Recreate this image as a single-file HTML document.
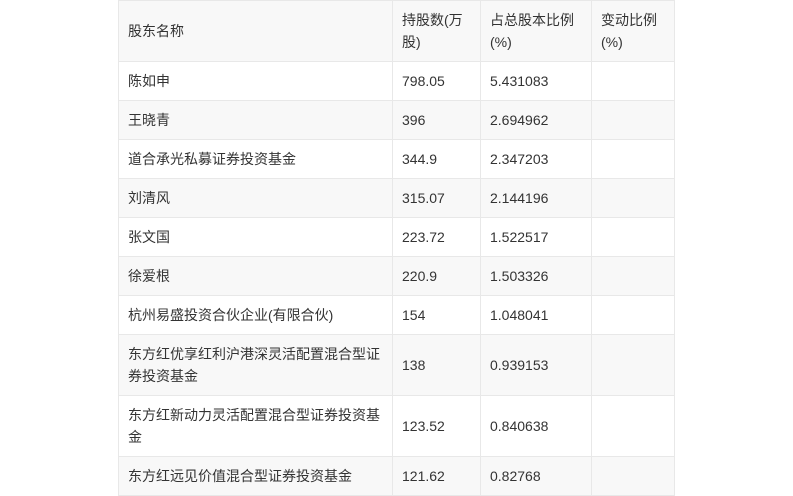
<!DOCTYPE html>
<html><head><meta charset="utf-8"><style>
html,body{margin:0;padding:0;background:#fff;width:793px;height:496px;overflow:hidden}
table{position:absolute;left:118px;top:0;border-collapse:collapse;table-layout:fixed;width:556px;
font-family:"Liberation Sans","Noto Sans CJK SC",sans-serif;font-size:14px;color:#333}
td{border:1px solid #e8e8e8;padding:0 9px;line-height:22px;vertical-align:middle;height:38px;word-break:break-all}
tr:nth-child(odd) td{background:#f8f8f8}
tr:nth-child(even) td{background:#fff}
tr.t td{height:60px}
</style></head><body>
<table>
<colgroup><col style="width:274px"><col style="width:88px"><col style="width:111px"><col style="width:83px"></colgroup>
<tr class="t"><td>股东名称</td><td>持股数(万股)</td><td>占总股本比例(%)</td><td>变动比例(%)</td></tr>
<tr><td>陈如申</td><td>798.05</td><td>5.431083</td><td></td></tr>
<tr><td>王晓青</td><td>396</td><td>2.694962</td><td></td></tr>
<tr><td>道合承光私募证券投资基金</td><td>344.9</td><td>2.347203</td><td></td></tr>
<tr><td>刘清风</td><td>315.07</td><td>2.144196</td><td></td></tr>
<tr><td>张文国</td><td>223.72</td><td>1.522517</td><td></td></tr>
<tr><td>徐爱根</td><td>220.9</td><td>1.503326</td><td></td></tr>
<tr><td>杭州易盛投资合伙企业(有限合伙)</td><td>154</td><td>1.048041</td><td></td></tr>
<tr class="t"><td>东方红优享红利沪港深灵活配置混合型证券投资基金</td><td>138</td><td>0.939153</td><td></td></tr>
<tr class="t"><td>东方红新动力灵活配置混合型证券投资基金</td><td>123.52</td><td>0.840638</td><td></td></tr>
<tr><td>东方红远见价值混合型证券投资基金</td><td>121.62</td><td>0.82768</td><td></td></tr>
</table>
</body></html>
